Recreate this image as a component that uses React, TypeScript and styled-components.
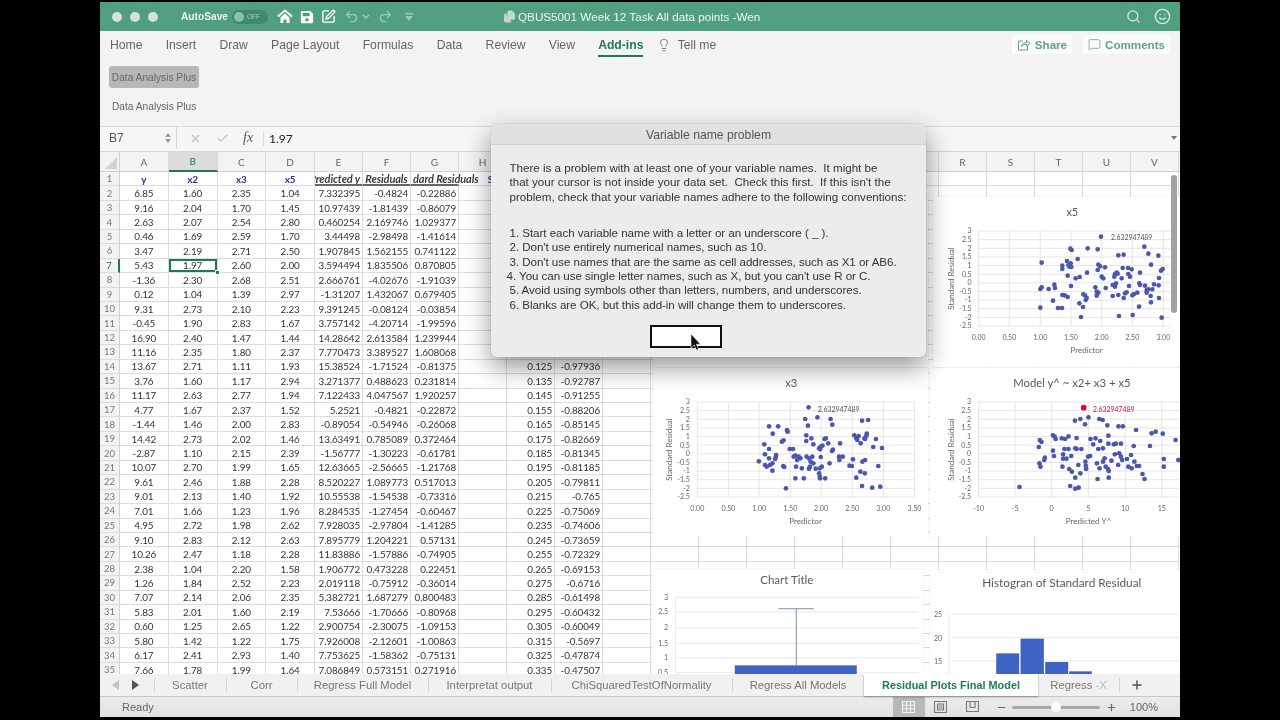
import React from 'react';
import styled, { createGlobalStyle } from 'styled-components';
import {
  Check,
  Files,
  Lightbulb,
  MessageSquare,
  Minus,
  Plus,
  Redo2,
  Search,
  Smile,
  SquarePen,
  Undo2,
  X,
} from 'lucide-react';
import { FaSave } from 'react-icons/fa';

const GlobalStyle = createGlobalStyle`
  html, body {
    margin: 0;
    padding: 0;
    background: #000;
  }
`;

const UI_FONT = `"Liberation Sans", Arial, sans-serif`;
const CELL_FONT = `Lato, "Open Sans", sans-serif`;
const COLUMNS = `20px repeat(4, 48.75px) repeat(18, 48px)`;
const GREEN = '#1f7a54';

const Page = styled.div`
  width: 1280px;
  height: 720px;
  padding: 2px 100px 3px;
  box-sizing: border-box;
  background: #000;
  overflow: hidden;
  font-family: ${UI_FONT};
`;

const Soft = styled.div`
  position: relative;
  height: 100%;
  filter: blur(0.4px);
`;

const Window = styled.div`
  height: 100%;
  display: flex;
  flex-direction: column;
  background: #f3f3f3;
`;

const TitleBar = styled.div`
  position: relative;
  height: 29px;
  flex: none;
  display: flex;
  align-items: center;
  background: #50a07f;
  color: #fff;
`;

const Lights = styled.div`
  display: flex;
  gap: 8px;
  margin-left: 12px;
`;

const Light = styled.span`
  width: 10px;
  height: 10px;
  border-radius: 50%;
  background: #d5e2dc;
`;

const AutoSave = styled.span`
  margin-left: 23px;
  font-size: 10.2px;
  font-weight: 700;
  color: #e8f3ee;
`;

const Toggle = styled.span`
  margin-left: 4px;
  width: 36px;
  height: 14px;
  border-radius: 7px;
  background: #3f8a6b;
  display: flex;
  align-items: center;
  gap: 3px;
  padding-left: 2px;
  box-sizing: border-box;
  font-size: 6.5px;
  color: #a9cfbf;
`;

const ToggleKnob = styled.span`
  width: 10px;
  height: 10px;
  border-radius: 50%;
  background: #8fbfa9;
`;

const QuickIcons = styled.div`
  display: flex;
  align-items: center;
  margin-left: 9px;
  width: 150px;
  gap: 7px;
`;

const Faded = styled.span<{ $gap?: number }>`
  display: flex;
  align-items: center;
  opacity: 0.45;
  margin-left: ${(p) => p.$gap ?? 0}px;
`;

const DocTitle = styled.div`
  position: absolute;
  left: 403px;
  top: 8px;
  display: flex;
  align-items: center;
  gap: 2px;
  font-size: 11.7px;
  color: #eef6f2;
`;

const TitleRight = styled.div`
  margin-left: auto;
  margin-right: 9px;
  display: flex;
  align-items: center;
  gap: 13px;
  color: #d8ebe2;
`;

const RibbonTabs = styled.div`
  height: 27px;
  flex: none;
  display: flex;
  align-items: center;
  padding-left: 10px;
  gap: 23.2px;
  font-size: 12.2px;
  color: #666;
`;

const RibbonTab = styled.span<{ $active?: boolean }>`
  position: relative;
  font-weight: ${(p) => (p.$active ? 700 : 400)};
  color: ${(p) => (p.$active ? GREEN : '#666')};

  &::after {
    content: '';
    display: ${(p) => (p.$active ? 'block' : 'none')};
    position: absolute;
    left: 0;
    right: 0;
    bottom: -5px;
    height: 2px;
    background: ${GREEN};
  }
`;

const TellMe = styled.span`
  display: flex;
  align-items: center;
  gap: 7px;
  margin-left: -10px;
  color: #666;
`;

const RibbonActions = styled.div`
  margin-left: auto;
  margin-right: 10px;
  display: flex;
  gap: 11px;
`;

const RibbonAction = styled.span`
  height: 19px;
  padding: 0 5px;
  display: flex;
  align-items: center;
  gap: 4px;
  background: #fbfbfb;
  color: #62a188;
  font-size: 11.6px;
  font-weight: 700;
`;

const RibbonBody = styled.div`
  height: 68px;
  flex: none;
  padding: 8px 0 0 9px;
  box-sizing: border-box;
  font-size: 10.2px;
  color: #666;
`;

const RibbonButton = styled.div`
  width: 90px;
  height: 22px;
  border-radius: 3px;
  background: #b7b7b7;
  display: flex;
  align-items: center;
  justify-content: center;
`;

const RibbonCaption = styled.div`
  margin: 13px 0 0 3px;
`;

const FormulaBar = styled.div`
  height: 25px;
  flex: none;
  display: flex;
  align-items: center;
  border-top: 1px solid #d8d8d8;
  box-sizing: border-box;
  padding-bottom: 2px;
  font-size: 12px;
  color: #444;
  background: #f6f6f6;
`;

const NameBox = styled.div`
  width: 77px;
  height: 100%;
  display: flex;
  align-items: center;
  justify-content: space-between;
  padding: 0 5px 0 9px;
  box-sizing: border-box;
  border-right: 1px solid #d5d5d5;
  color: #555;
`;

const Stepper = styled.span`
  display: flex;
  flex-direction: column;
  gap: 2px;
`;

const StepArrow = styled.i<{ $down?: boolean }>`
  display: block;
  width: 0;
  border-left: 3px solid transparent;
  border-right: 3px solid transparent;
  ${(p) => (p.$down ? 'border-top' : 'border-bottom')}: 4px solid #999;
`;

const FormulaIcons = styled.div`
  width: 86px;
  display: flex;
  align-items: center;
  gap: 14px;
  padding-left: 12px;
  box-sizing: border-box;
  color: #bdbdbd;
`;

const Fx = styled.span`
  font: italic 14px "Liberation Serif", serif;
  color: #555;
`;

const FormulaValue = styled.span`
  border-left: 1px solid #ddd;
  padding-left: 5px;
  font-family: ${CELL_FONT};
  color: #222;
  font-size: 12px;
`;

const FormulaCaret = styled.i`
  margin-left: auto;
  margin-right: 3px;
  border-left: 3px solid transparent;
  border-right: 3px solid transparent;
  border-top: 4px solid #777;
`;

const SheetArea = styled.div`
  position: relative;
  flex: 1;
  min-height: 0;
  overflow: hidden;
  background: #fff;
`;

const ColumnHeaders = styled.div`
  display: grid;
  grid-template-columns: ${COLUMNS};
  height: 21px;
  background: #f3f3f3;
  border-top: 1px solid #d5d5d5;
  box-sizing: border-box;
`;

const Corner = styled.div`
  border-right: 1px solid #d0d0d0;
  border-bottom: 1px solid #d0d0d0;
  display: flex;
  align-items: flex-end;
  justify-content: flex-end;

  &::after {
    content: '';
    border-left: 12px solid transparent;
    border-bottom: 12px solid #d2d2d2;
    margin: 0 2px 2px 0;
  }
`;

const ColumnHeader = styled.div<{ $active?: boolean }>`
  display: flex;
  align-items: center;
  justify-content: center;
  font: 10px ${CELL_FONT};
  color: ${(p) => (p.$active ? GREEN : '#666')};
  background: ${(p) => (p.$active ? '#dcdcdc' : 'transparent')};
  border-right: 1px solid #dadada;
  border-bottom: ${(p) => (p.$active ? `2px solid ${GREEN}` : '1px solid #d0d0d0')};
`;

const Cells = styled.div`
  display: grid;
  grid-template-columns: ${COLUMNS};
  grid-auto-rows: 14.45px;
`;

const RowHeader = styled.div<{ $active?: boolean }>`
  display: flex;
  align-items: center;
  justify-content: center;
  font: 9.5px ${CELL_FONT};
  background: #f3f3f3;
  color: ${(p) => (p.$active ? GREEN : '#777')};
  border-right: ${(p) => (p.$active ? `2px solid ${GREEN}` : '1px solid #d0d0d0')};
  border-bottom: 1px solid #dcdcdc;
  box-sizing: border-box;
`;

const Cell = styled.div<{
  $align?: string;
  $heading?: boolean;
  $italic?: boolean;
  $selected?: boolean;
  $spill?: boolean;
  $padRight?: number;
}>`
  position: relative;
  display: flex;
  align-items: center;
  justify-content: ${(p) => p.$align ?? 'center'};
  padding: 0 ${(p) => p.$padRight ?? 2}px 0 2px;
  box-sizing: border-box;
  white-space: nowrap;
  font: ${(p) => (p.$heading ? 700 : 400)} ${(p) => (p.$italic ? 11 : 9.9)}px ${CELL_FONT};
  font-style: ${(p) => (p.$italic ? 'italic' : 'normal')};
  letter-spacing: -0.12px;
  color: ${(p) => (p.$heading ? (p.$italic ? '#3d3d3d' : '#3529b0') : '#333')};
  overflow: ${(p) => (p.$spill ? 'visible' : 'hidden')};
  border-right: 1px solid #dcdcdc;
  border-bottom: ${(p) => (p.$italic ? '2px solid #666' : '1px solid #dcdcdc')};
  ${(p) =>
    p.$selected
      ? `
    box-shadow: inset 0 0 0 2px ${GREEN};
    overflow: visible;
    &::after {
      content: '';
      position: absolute;
      right: -3px;
      bottom: -3px;
      width: 5px;
      height: 5px;
      background: ${GREEN};
      border: 1px solid #fff;
      box-sizing: border-box;
      z-index: 1;
    }`
      : ''}
`;

const ChartCard = styled.div<{ $left: number; $top: number; $width: number; $height: number }>`
  position: absolute;
  left: ${(p) => p.$left - 100}px;
  top: ${(p) => p.$top - 151}px;
  width: ${(p) => p.$width}px;
  height: ${(p) => p.$height}px;
  background: #fff;
  overflow: hidden;
  box-shadow: 0 0 1px rgba(0, 0, 0, 0.18);
`;

const ChartSvg = styled.svg`
  display: block;
  width: 100%;
  height: 100%;
  font-family: ${CELL_FONT};
`;

const ScrollThumb = styled.div`
  position: absolute;
  right: 3px;
  top: 24px;
  width: 6px;
  height: 138px;
  border-radius: 3px;
  background: #a2a2a2;
`;

const TabBar = styled.div`
  height: 23px;
  flex: none;
  display: flex;
  align-items: stretch;
  background: #f1f1f1;
  border-bottom: 1px solid #c6c6c6;
  box-sizing: border-box;
  font-size: 11.3px;
  color: #777;
`;

const TabArrows = styled.div`
  width: 54px;
  display: flex;
  align-items: center;
  gap: 13px;
  padding-left: 12px;
  box-sizing: border-box;
`;

const TabArrow = styled.i<{ $dim?: boolean; $left?: boolean }>`
  border-top: 5px solid transparent;
  border-bottom: 5px solid transparent;
  ${(p) => (p.$left ? 'border-right' : 'border-left')}: 7px solid
    ${(p) => (p.$dim ? '#c4c4c4' : '#555')};
`;

const Tab = styled.div<{ $active?: boolean; $width: number }>`
  width: ${(p) => p.$width}px;
  flex: none;
  display: flex;
  align-items: center;
  justify-content: center;
  white-space: nowrap;
  position: relative;
  font-size: ${(p) => (p.$active ? '10.9px' : 'inherit')};
  font-weight: ${(p) => (p.$active ? 700 : 400)};
  color: ${(p) => (p.$active ? GREEN : '#777')};
  background: ${(p) => (p.$active ? '#fff' : 'transparent')};
  height: ${(p) => (p.$active ? '22px' : 'auto')};
  box-shadow: ${(p) => (p.$active ? '0 1px 2px rgba(0,0,0,.35)' : 'none')};

  &::before {
    content: '';
    position: absolute;
    left: 0;
    top: 4px;
    bottom: 4px;
    width: 1px;
    background: ${(p) => (p.$active ? 'transparent' : '#d4d4d4')};
  }
`;

const FadeTail = styled.span`
  opacity: 0.45;
`;

const StatusBar = styled.div`
  height: 20px;
  flex: none;
  display: flex;
  align-items: center;
  padding-left: 22px;
  font-size: 11px;
  color: #666;
  background: linear-gradient(#ececec, #e2e2e2);
`;

const StatusRight = styled.div`
  margin-left: auto;
  margin-right: 22px;
  height: 100%;
  display: flex;
  align-items: center;
`;

const ViewButton = styled.span<{ $active?: boolean }>`
  width: 32px;
  height: 100%;
  display: flex;
  align-items: center;
  justify-content: center;
  background: ${(p) => (p.$active ? '#b8b8b8' : 'transparent')};
  color: ${(p) => (p.$active ? '#f4f4f4' : '#777')};
`;

const ViewGap = styled.span`
  width: 7px;
`;

const ZoomSlider = styled.div`
  position: relative;
  width: 88px;
  height: 3px;
  margin: 0 6px 0 5px;
  border-radius: 2px;
  background: #a8a8a8;

  &::after {
    content: '';
    position: absolute;
    left: 39px;
    top: -4px;
    width: 10px;
    height: 10px;
    border-radius: 50%;
    background: #fdfdfd;
  }
`;

const ZoomValue = styled.span`
  margin-left: 13px;
`;

const Dialog = styled.div`
  position: absolute;
  left: 391px;
  top: 122px;
  width: 435px;
  height: 233px;
  border-radius: 5px;
  overflow: hidden;
  background: #ececec;
  box-shadow: 0 10px 26px rgba(0, 0, 0, 0.42), 0 0 1px rgba(0, 0, 0, 0.4);
  color: #333;
  font-size: 11.6px;
  line-height: 14.4px;
`;

const DialogTitle = styled.div`
  height: 21px;
  display: flex;
  align-items: center;
  justify-content: center;
  padding-top: 2px;
  background: #e1e1e1;
  border-bottom: 1px solid #d0d0d0;
  font-size: 12.2px;
  color: #555;
  box-sizing: border-box;
`;

const DialogBody = styled.div`
  padding: 16px 0 0 18.5px;
`;

const Paragraph = styled.div`
  margin-bottom: 21.6px;
`;

const Conventions = styled.div`
  letter-spacing: -0.05px;
`;

const Line = styled.div<{ $outdent?: boolean }>`
  white-space: pre;
  margin-left: ${(p) => (p.$outdent ? -3 : 0)}px;
`;

const DialogButton = styled.div`
  width: 72px;
  height: 23px;
  margin: 13px 0 0 140.5px;
  box-sizing: border-box;
  background: #fff;
  border: 2px solid #111;
`;

const CursorMark = styled.svg`
  position: absolute;
  left: 590px;
  top: 332px;
`;

const columnNames = 'A B C D E F G H I J K L M N O P Q R S T U V'.split(' ');

const rows = [
  ['6.85', '1.60', '2.35', '1.04', '7.332395', '-0.4824', '-0.22886'],
  ['9.16', '2.04', '1.70', '1.45', '10.97439', '-1.81439', '-0.86079'],
  ['2.63', '2.07', '2.54', '2.80', '0.460254', '2.169746', '1.029377'],
  ['0.46', '1.69', '2.59', '1.70', '3.44498', '-2.98498', '-1.41614'],
  ['3.47', '2.19', '2.71', '2.50', '1.907845', '1.562155', '0.741122'],
  ['5.43', '1.97', '2.60', '2.00', '3.594494', '1.835506', '0.870805'],
  ['-1.36', '2.30', '2.68', '2.51', '2.666761', '-4.02676', '-1.91039'],
  ['0.12', '1.04', '1.39', '2.97', '-1.31207', '1.432067', '0.679405'],
  ['9.31', '2.73', '2.10', '2.23', '9.391245', '-0.08124', '-0.03854'],
  ['-0.45', '1.90', '2.83', '1.67', '3.757142', '-4.20714', '-1.99596'],
  ['16.90', '2.40', '1.47', '1.44', '14.28642', '2.613584', '1.239944'],
  ['11.16', '2.35', '1.80', '2.37', '7.770473', '3.389527', '1.608068'],
  ['13.67', '2.71', '1.11', '1.93', '15.38524', '-1.71524', '-0.81375'],
  ['3.76', '1.60', '1.17', '2.94', '3.271377', '0.488623', '0.231814'],
  ['11.17', '2.63', '2.77', '1.94', '7.122433', '4.047567', '1.920257'],
  ['4.77', '1.67', '2.37', '1.52', '5.2521', '-0.4821', '-0.22872'],
  ['-1.44', '1.46', '2.00', '2.83', '-0.89054', '-0.54946', '-0.26068'],
  ['14.42', '2.73', '2.02', '1.46', '13.63491', '0.785089', '0.372464'],
  ['-2.87', '1.10', '2.15', '2.39', '-1.56777', '-1.30223', '-0.61781'],
  ['10.07', '2.70', '1.99', '1.65', '12.63665', '-2.56665', '-1.21768'],
  ['9.61', '2.46', '1.88', '2.28', '8.520227', '1.089773', '0.517013'],
  ['9.01', '2.13', '1.40', '1.92', '10.55538', '-1.54538', '-0.73316'],
  ['7.01', '1.66', '1.23', '1.96', '8.284535', '-1.27454', '-0.60467'],
  ['4.95', '2.72', '1.98', '2.62', '7.928035', '-2.97804', '-1.41285'],
  ['9.10', '2.83', '2.12', '2.63', '7.895779', '1.204221', '0.57131'],
  ['10.26', '2.47', '1.18', '2.28', '11.83886', '-1.57886', '-0.74905'],
  ['2.38', '1.04', '2.20', '1.58', '1.906772', '0.473228', '0.22451'],
  ['1.26', '1.84', '2.52', '2.23', '2.019118', '-0.75912', '-0.36014'],
  ['7.07', '2.14', '2.06', '2.35', '5.382721', '1.687279', '0.800483'],
  ['5.83', '2.01', '1.60', '2.19', '7.53666', '-1.70666', '-0.80968'],
  ['0.60', '1.25', '2.65', '1.22', '2.900754', '-2.30075', '-1.09153'],
  ['5.80', '1.42', '1.22', '1.75', '7.926008', '-2.12601', '-1.00863'],
  ['6.17', '2.41', '2.93', '1.40', '7.753625', '-1.58362', '-0.75131'],
  ['7.66', '1.78', '1.99', '1.64', '7.086849', '0.573151', '0.271916'],
];

// column I and J, from row 14 down
const bins = [
  '-0.97936', '-0.92787', '-0.91255', '-0.88206', '-0.85145', '-0.82669', '-0.81345', '-0.81185',
  '-0.79811', '-0.765', '-0.75069', '-0.74606', '-0.73659', '-0.72329', '-0.69153', '-0.6716',
  '-0.61498', '-0.60432', '-0.60049', '-0.5697', '-0.47874', '-0.47507',
];

type Pt = [number, number];

const x5Dots: Pt[] = [
  [513,260],[421,296],[425,300],[473,295],[503,298],[335,338],[443,327],[411,333],[415,345],[422,340],
  [418,350],[397,347],[397,357],[413,377],[424,351],[437,385],[449,381],[471,368],[505,344],[510,349],
  [525,352],[515,380],[520,385],[503,360],[565,316],[581,314],[643,290],[655,311],[685,317],[663,344],
  [578,354],[594,354],[605,358],[630,368],[560,368],[555,372],[553,380],[575,385],[595,372],[600,380],
  [563,371],[687,384],[693,362],[698,357],[335,412],[331,417],[356,417],[373,404],[375,414],[369,452],
  [331,473],[384,474],[396,474],[397,435],[404,436],[413,441],[423,408],[448,460],[459,471],[453,501],
  [460,433],[465,436],[470,444],[467,450],[496,412],[505,428],[500,425],[500,437],[527,414],[548,405],
  [558,400],[555,410],[548,438],[565,435],[581,444],[567,498],[608,495],[607,436],[612,432],[590,427],
  [597,408],[585,430],[622,428],[628,400],[630,405],[645,407],[650,420],[650,428],[655,418],[662,438],
  [627,470],[663,457],[672,403],[667,418],[686,406],[687,444],[695,503],
];

const x3Dots: Pt[] = [
  [469,127],[459,162],[467,182],[495,157],[534,162],[539,179],[627,167],[645,165],[352,184],[379,184],
  [405,195],[407,200],[363,206],[395,226],[390,230],[338,238],[352,252],[413,252],[423,252],[462,211],
  [462,228],[477,220],[483,238],[516,222],[520,220],[527,235],[562,235],[541,254],[538,258],[505,245],
  [510,242],[500,250],[503,253],[604,211],[617,213],[610,220],[613,225],[641,206],[640,212],[636,222],
  [634,220],[623,235],[668,222],[660,246],[686,249],[322,289],[340,268],[373,270],[372,276],[370,282],
  [352,280],[362,295],[340,300],[355,300],[345,305],[362,317],[394,303],[397,306],[430,272],[440,275],
  [445,280],[435,285],[425,275],[432,305],[449,310],[430,340],[455,340],[463,275],[470,280],[480,275],
  [475,290],[483,295],[473,305],[470,311],[490,311],[505,276],[508,305],[502,310],[500,325],[502,335],
  [503,340],[518,340],[531,295],[559,275],[570,275],[560,285],[590,302],[597,303],[600,283],[628,290],
  [636,285],[622,320],[635,325],[610,338],[627,363],[657,368],[681,365],[675,303],[402,370],
];

const modelDots: Pt[] = [
  [1093,366],[1257,167],[1273,162],[1297,157],[1287,178],[1329,162],[1339,165],[1353,181],[1386,184],[1399,184],
  [1438,195],[1484,205],[1496,200],[1517,206],[1555,225],[1192,211],[1197,215],[1200,222],[1218,220],[1228,222],
  [1238,214],[1262,219],[1303,222],[1318,220],[1332,228],[1311,238],[1356,212],[1356,236],[1372,238],[1378,236],
  [1393,236],[1431,243],[1479,243],[1153,225],[1158,231],[1150,246],[1192,257],[1226,252],[1238,252],[1258,250],
  [1262,252],[1276,252],[1326,252],[1340,250],[1195,273],[1222,268],[1246,273],[1222,281],[1232,281],[1168,278],
  [1166,285],[1152,295],[1155,305],[1220,305],[1240,312],[1248,320],[1267,300],[1296,275],[1302,273],[1288,290],
  [1289,302],[1290,312],[1322,295],[1330,310],[1340,290],[1345,280],[1365,287],[1348,305],[1355,312],[1357,318],
  [1375,268],[1388,265],[1393,275],[1397,285],[1385,300],[1411,282],[1423,270],[1415,305],[1425,310],[1433,290],
  [1440,303],[1447,303],[1520,282],[1520,305],[1457,327],[1463,342],[1324,342],[1357,338],[1258,338],[1273,325],
  [1243,363],[1258,371],[1268,368],[1563,285],
];

const yTicks = ['3', '2.5', '2', '1.5', '1', '0.5', '0', '-0.5', '-1', '-1.5', '-2', '-2.5'];

type ScatterProps = {
  viewBox: string;
  plot: { left: number; right: number; top: number; bottom: number };
  title: string;
  titlePos: Pt;
  titleSize: number;
  yLabelX: number;
  yTitleX: number;
  xTicks: [string, number][];
  xLabelY: number;
  xTitle: string;
  xTitlePos: Pt;
  dots: Pt[];
  peak?: Pt;
  note: Pt;
};

function Scatter(props: ScatterProps) {
  const { plot, dots, xTicks, note, peak } = props;
  const step = (plot.bottom - plot.top) / 11;
  const midY = (plot.top + plot.bottom) / 2;
  return (
    <ChartSvg viewBox={props.viewBox} preserveAspectRatio="none">
      {yTicks.map((t, i) => (
        <g key={t}>
          <line x1={plot.left} x2={plot.right} y1={plot.top + i * step} y2={plot.top + i * step} stroke="#d9d9d9" strokeWidth={2} />
          <text x={props.yLabelX} y={plot.top + i * step + 7} textAnchor="end" fontSize={21} fill="#666">
            {t}
          </text>
        </g>
      ))}
      {xTicks.map(([t, x]) => (
        <g key={t}>
          <line x1={x} x2={x} y1={plot.top} y2={plot.bottom} stroke="#d9d9d9" strokeWidth={2} />
          <text x={x} y={props.xLabelY + 7} textAnchor="middle" fontSize={21} fill="#666">
            {t}
          </text>
        </g>
      ))}
      <text x={props.titlePos[0]} y={props.titlePos[1] + 11} textAnchor="middle" fontSize={props.titleSize} fill="#595959">
        {props.title}
      </text>
      <text x={props.xTitlePos[0]} y={props.xTitlePos[1] + 8} textAnchor="middle" fontSize={24} fill="#666">
        {props.xTitle}
      </text>
      <text transform={`translate(${props.yTitleX + 8} ${midY}) rotate(-90)`} textAnchor="middle" fontSize={24} fill="#666">
        Standard Residual
      </text>
      {dots.map(([x, y], i) => (
        <circle key={i} cx={x} cy={y} r={7} fill="#4a57ad" />
      ))}
      {peak && <circle cx={peak[0]} cy={peak[1]} r={8.5} fill="#e3062c" />}
      <text x={note[0]} y={note[1] + 7} textAnchor="middle" fontSize={20.5} fill={peak ? '#d9123a' : '#555'}>
        2.632947489
      </text>
    </ChartSvg>
  );
}

function ColumnChart() {
  const labels: [string, number][] = [['3', 173], ['2.5', 217], ['2', 265], ['1.5', 311], ['1', 354], ['0.5', 398]];
  return (
    <ChartSvg viewBox="6 88 802 315" preserveAspectRatio="none">
      <text x={405} y={134} textAnchor="middle" fontSize={34} fill="#595959">Chart Title</text>
      {labels.map(([t, y]) => (
        <g key={t}>
          <line x1={78} x2={795} y1={y} y2={y} stroke="#dcdcdc" strokeWidth={2} />
          <text x={54} y={y + 7} textAnchor="end" fontSize={21} fill="#666">{t}</text>
        </g>
      ))}
      <line x1={75} x2={75} y1={170} y2={403} stroke="#dcdcdc" strokeWidth={2} />
      <rect x={251} y={377} width={361} height={30} fill="#3f63c4" />
      <path d="M433 377V207M380 207H485" stroke="#7f8fa8" strokeWidth={3} fill="none" />
    </ChartSvg>
  );
}

function HistogramChart() {
  const ticks: [string, number][] = [['25', 223], ['20', 293], ['15', 363]];
  const bars: [number, number, number][] = [[1024, 340, 68], [1096, 296, 69], [1169, 366, 68], [1240, 394, 67]];
  return (
    <ChartSvg viewBox="828 90 740 315" preserveAspectRatio="none">
      <text x={1218} y={140} textAnchor="middle" fontSize={35} fill="#595959">Histogran of Standard Residual</text>
      {ticks.map(([t, y]) => (
        <g key={t}>
          <line x1={895} x2={1568} y1={y} y2={y} stroke="#dcdcdc" strokeWidth={2} />
          <text x={864} y={y + 9} textAnchor="end" fontSize={21} fill="#666">{t}</text>
        </g>
      ))}
      <line x1={884} x2={884} y1={220} y2={405} stroke="#dcdcdc" strokeWidth={2} />
      {bars.map(([x, y, w]) => (
        <rect key={x} x={x} y={y} width={w} height={410 - y} fill="#3f63c4" />
      ))}
    </ChartSvg>
  );
}

function HomeIcon() {
  return (
    <svg width="16" height="15" viewBox="0 0 16 15" fill="none">
      <path d="M1 7.5 8 1.5l7 6" stroke="#fff" strokeWidth="2" />
      <path d="M3.5 8.5 8 4.6l4.5 3.9V14H9.6v-3.5H6.4V14H3.5z" fill="#fff" />
    </svg>
  );
}

function ShareIcon() {
  return (
    <svg width="14" height="13" viewBox="0 0 14 13" fill="none" stroke="#62a188" strokeWidth="1">
      <path d="M6 3H1.5v9h9V8" />
      <path d="M4.5 8.5C5 5.5 7 4.5 9.5 4.5V2.2L13 5.2 9.5 8V6C7.5 6 6 6.8 4.5 8.5z" />
    </svg>
  );
}

function GridViewIcon() {
  return (
    <svg width="13" height="12" viewBox="0 0 13 12" fill="none" stroke="currentColor" strokeWidth="1.1">
      <path d="M.5.5h12v11H.5zM.5 4.2h12M.5 7.8h12M4.5.5v11M8.5.5v11" />
    </svg>
  );
}

function LayoutViewIcon() {
  return (
    <svg width="13" height="12" viewBox="0 0 13 12" fill="none" stroke="currentColor" strokeWidth="1.1">
      <path d="M.5.5h12v11H.5zM3.5 3h6v6h-6zM4.5 5h4M4.5 7h4" />
    </svg>
  );
}

function BreakViewIcon() {
  return (
    <svg width="13" height="12" viewBox="0 0 13 12" fill="none" stroke="currentColor" strokeWidth="1.1">
      <path d="M.5.5h12v10H.5zM4 .5v6h5v-6" />
    </svg>
  );
}

function renderDataCell(rowIndex: number, colIndex: number) {
  const number = rowIndex + 1;
  const values = rows[rowIndex - 1];
  const key = `${number}-${colIndex}`;
  if (colIndex < 4) {
    return (
      <Cell key={key} $selected={number === 7 && colIndex === 1}>
        {values[colIndex]}
      </Cell>
    );
  }
  if (colIndex < 7) {
    return (
      <Cell key={key} $align="flex-end">
        {values[colIndex]}
      </Cell>
    );
  }
  if (number >= 14 && colIndex === 8) {
    return (
      <Cell key={key} $align="flex-end">
        {(0.125 + (number - 14) * 0.01).toFixed(3)}
      </Cell>
    );
  }
  if (number >= 14 && colIndex === 9) {
    return (
      <Cell key={key} $align="flex-end">
        {bins[number - 14]}
      </Cell>
    );
  }
  return <Cell key={key} />;
}

function renderHeadingCell(colIndex: number) {
  const key = `head-${colIndex}`;
  if (colIndex < 4) {
    return <Cell key={key} $heading>{['y', 'x2', 'x3', 'x5'][colIndex]}</Cell>;
  }
  if (colIndex === 4) return <Cell key={key} $heading $italic $align="flex-end">Predicted y</Cell>;
  if (colIndex === 5) return <Cell key={key} $heading $italic>Residuals</Cell>;
  if (colIndex === 6) return <Cell key={key} $heading $italic $spill $align="flex-start">dard Residuals</Cell>;
  if (colIndex === 7) return <Cell key={key} $heading $align="flex-end" $padRight={13}>S</Cell>;
  return <Cell key={key} />;
}

export default function App() {
  return (
    <Page>
      <GlobalStyle />
      <Soft>
        <Window>
          <TitleBar>
            <Lights>
              <Light />
              <Light />
              <Light />
            </Lights>
            <AutoSave>AutoSave</AutoSave>
            <Toggle>
              <ToggleKnob />
              OFF
            </Toggle>
            <QuickIcons>
              <HomeIcon />
              <FaSave size={14} />
              <SquarePen size={15} strokeWidth={2.2} />
              <Faded $gap={1}>
                <Undo2 size={15} />
              </Faded>
              <Faded $gap={-4}>
                <svg width="8" height="6" viewBox="0 0 8 6" fill="none" stroke="#fff" strokeWidth="1.5">
                  <path d="M1 1l3 3 3-3" />
                </svg>
              </Faded>
              <Faded $gap={1}>
                <Redo2 size={15} />
              </Faded>
              <Faded $gap={5}>
                <svg width="8" height="8" viewBox="0 0 8 8" fill="#fff">
                  <path d="M0 0h8v1.4H0zM0 3h8L4 8z" />
                </svg>
              </Faded>
            </QuickIcons>
            <DocTitle>
              <Files size={13} color="#c4d8ce" fill="#c4d8ce" />
              QBUS5001 Week 12 Task All data points -Wen
            </DocTitle>
            <TitleRight>
              <Search size={15} />
              <Smile size={17} />
            </TitleRight>
          </TitleBar>

          <RibbonTabs>
            <RibbonTab>Home</RibbonTab>
            <RibbonTab>Insert</RibbonTab>
            <RibbonTab>Draw</RibbonTab>
            <RibbonTab>Page Layout</RibbonTab>
            <RibbonTab>Formulas</RibbonTab>
            <RibbonTab>Data</RibbonTab>
            <RibbonTab>Review</RibbonTab>
            <RibbonTab>View</RibbonTab>
            <RibbonTab $active>Add-ins</RibbonTab>
            <TellMe>
              <Lightbulb size={14} strokeWidth={1.4} />
              Tell me
            </TellMe>
            <RibbonActions>
              <RibbonAction>
                <ShareIcon />
                Share
              </RibbonAction>
              <RibbonAction>
                <MessageSquare size={13} strokeWidth={1.4} />
                Comments
              </RibbonAction>
            </RibbonActions>
          </RibbonTabs>

          <RibbonBody>
            <RibbonButton>Data Analysis Plus</RibbonButton>
            <RibbonCaption>Data Analysis Plus</RibbonCaption>
          </RibbonBody>

          <FormulaBar>
            <NameBox>
              B7
              <Stepper>
                <StepArrow />
                <StepArrow $down />
              </Stepper>
            </NameBox>
            <FormulaIcons>
              <X size={13} />
              <Check size={13} />
              <Fx>fx</Fx>
            </FormulaIcons>
            <FormulaValue>1.97</FormulaValue>
            <FormulaCaret />
          </FormulaBar>

          <SheetArea>
            <ColumnHeaders>
              <Corner />
              {columnNames.map((name) => (
                <ColumnHeader key={name} $active={name === 'B'}>
                  {name}
                </ColumnHeader>
              ))}
            </ColumnHeaders>
            <Cells>
              {rows.concat([[]]).map((_, rowIndex) => (
                <React.Fragment key={rowIndex}>
                  <RowHeader $active={rowIndex === 6}>{rowIndex + 1}</RowHeader>
                  {columnNames.map((_name, colIndex) =>
                    rowIndex === 0 ? renderHeadingCell(colIndex) : renderDataCell(rowIndex, colIndex)
                  )}
                </React.Fragment>
              ))}
            </Cells>

            <ChartCard $left={653} $top={197} $width={275} $height={170} />

            <ChartCard $left={933} $top={197} $width={247} $height={170}>
              <Scatter
                viewBox="9 141 741 510"
                plot={{ left: 146, right: 722, top: 243, bottom: 528 }}
                title="x5"
                titlePos={[427, 188]}
                titleSize={33}
                yLabelX={125}
                yTitleX={65}
                xTicks={[['0.00', 146], ['0.50', 238], ['1.00', 331], ['1.50', 423], ['2.00', 515], ['2.50', 607], ['3.00', 700]]}
                xLabelY={562}
                xTitle="Predictor"
                xTitlePos={[470, 602]}
                dots={x5Dots}
                note={[605, 264]}
              />
            </ChartCard>

            <ChartCard $left={653} $top={368} $width={275} $height={169}>
              <Scatter
                viewBox="9 9 813 507"
                plot={{ left: 140, right: 783, top: 111, bottom: 396 }}
                title="x3"
                titlePos={[418, 55]}
                titleSize={33}
                yLabelX={118}
                yTitleX={58}
                xTicks={[['0.00', 140], ['0.50', 232], ['1.00', 323], ['1.50', 415], ['2.00', 506], ['2.50', 598], ['3.00', 690], ['3.50', 782]]}
                xLabelY={430}
                xTitle="Predictor"
                xTitlePos={[460, 470]}
                dots={x3Dots}
                note={[558, 133]}
              />
            </ChartCard>

            <ChartCard $left={930} $top={368} $width={250} $height={169}>
              <Scatter
                viewBox="828 9 740 507"
                plot={{ left: 972, right: 1600, top: 111, bottom: 396 }}
                title="Model y^ ~ x2+ x3 + x5"
                titlePos={[1248, 55]}
                titleSize={33.5}
                yLabelX={950}
                yTitleX={892}
                xTicks={[['-10', 972], ['-5', 1080], ['0', 1188], ['5', 1297], ['10', 1406], ['15', 1514]]}
                xLabelY={430}
                xTitle="Predicted Y^"
                xTitlePos={[1297, 470]}
                dots={modelDots}
                peak={[1283, 128]}
                note={[1372, 133]}
              />
            </ChartCard>

            <ChartCard $left={652} $top={569} $width={271} $height={105}>
              <ColumnChart />
            </ChartCard>

            <ChartCard $left={930} $top={570} $width={250} $height={105}>
              <HistogramChart />
            </ChartCard>

            <ScrollThumb />
          </SheetArea>

          <TabBar>
            <TabArrows>
              <TabArrow $left $dim />
              <TabArrow />
            </TabArrows>
            <Tab $width={72}>Scatter</Tab>
            <Tab $width={71}>Corr</Tab>
            <Tab $width={131}>Regress Full Model</Tab>
            <Tab $width={123}>Interpretat output</Tab>
            <Tab $width={181}>ChiSquaredTestOfNormality</Tab>
            <Tab $width={132}>Regress All Models</Tab>
            <Tab $width={174} $active>Residual Plots Final Model</Tab>
            <Tab $width={81}>
              <span>
                Regress <FadeTail>-X</FadeTail>
              </span>
            </Tab>
            <Tab $width={35}>
              <Plus size={14} strokeWidth={2.6} color="#555" />
            </Tab>
          </TabBar>

          <StatusBar>
            Ready
            <StatusRight>
              <ViewButton $active>
                <GridViewIcon />
              </ViewButton>
              <ViewButton>
                <LayoutViewIcon />
              </ViewButton>
              <ViewButton>
                <BreakViewIcon />
              </ViewButton>
              <ViewGap />
              <Minus size={11} strokeWidth={2.6} />
              <ZoomSlider />
              <Plus size={11} strokeWidth={2.6} />
              <ZoomValue>100%</ZoomValue>
            </StatusRight>
          </StatusBar>
        </Window>

        <Dialog>
          <DialogTitle>Variable name problem</DialogTitle>
          <DialogBody>
            <Paragraph>
              <Line>There is a problem with at least one of your variable names.  It might be</Line>
              <Line>that your cursor is not inside your data set.  Check this first.  If this isn't the</Line>
              <Line>problem, check that your variable names adhere to the following conventions:</Line>
            </Paragraph>
            <Conventions>
              <Line>1. Start each variable name with a letter or an underscore ( _ ).</Line>
              <Line>2. Don't use entirely numerical names, such as 10.</Line>
              <Line>3. Don't use names that are the same as cell addresses, such as X1 or AB6.</Line>
              <Line $outdent>4. You can use single letter names, such as X, but you can't use R or C.</Line>
              <Line>5. Avoid using symbols other than letters, numbers, and underscores.</Line>
              <Line>6. Blanks are OK, but this add-in will change them to underscores.</Line>
            </Conventions>
            <DialogButton />
          </DialogBody>
        </Dialog>

        <CursorMark width="11" height="17" viewBox="0 0 11 17">
          <path d="M1 0v14l3.2-3 2.2 5 2.2-1-2.2-4.8H10.5z" fill="#111" stroke="#eee" strokeWidth="0.6" />
        </CursorMark>
      </Soft>
    </Page>
  );
}
